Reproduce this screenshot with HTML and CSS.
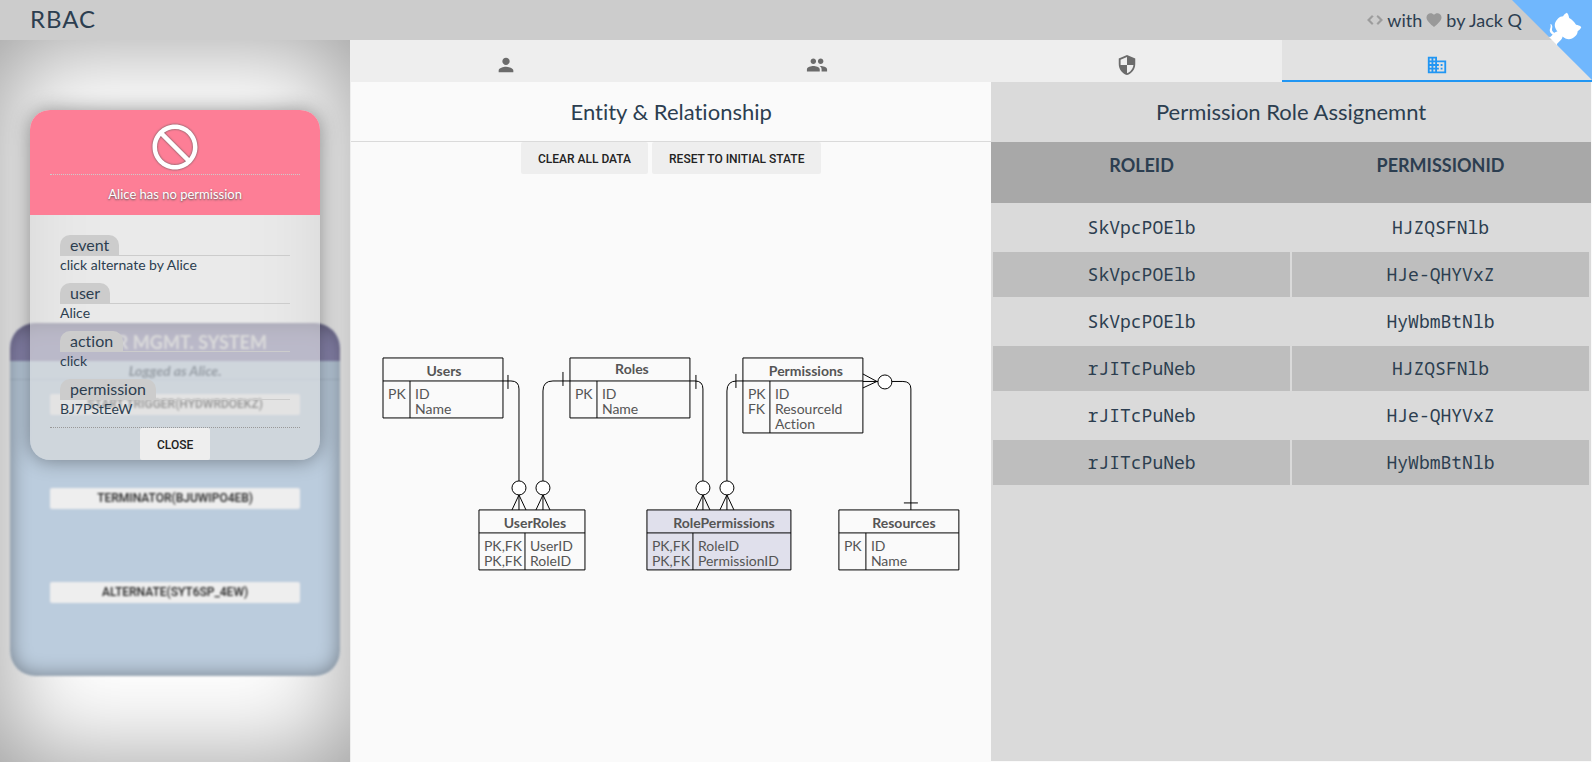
FILE: index.html
```html
<!DOCTYPE html>
<html lang="en">
<head>
<meta charset="utf-8">
<title>RBAC</title>
<link rel="stylesheet" href="styles.css">
</head>
<body>
<header class="topbar">
  <h1 class="brand">RBAC</h1>
  <p class="credit">
    <svg class="credit-icon credit-code" viewBox="0 0 24 24" aria-hidden="true"><path d="M9.4 16.6L4.8 12l4.6-4.6L8 6l-6 6 6 6 1.4-1.4zm5.2 0l4.6-4.6-4.6-4.6L16 6l6 6-6 6-1.4-1.4z"/></svg>
    <span>with</span>
    <svg class="credit-icon" viewBox="0 0 24 24" aria-hidden="true"><path d="M12 21.35l-1.45-1.32C5.4 15.36 2 12.28 2 8.5 2 5.42 4.42 3 7.5 3c1.74 0 3.41.81 4.5 2.09C13.09 3.81 14.76 3 16.5 3 19.58 3 22 5.42 22 8.5c0 3.78-3.4 6.86-8.55 11.54L12 21.35z"/></svg>
    <span>by Jack Q</span>
  </p>
</header>
<a class="corner" href="#" aria-label="View source on GitHub">
  <svg viewBox="0 0 250 250" aria-hidden="true">
    <path class="corner-bg" d="M0,0 L115,115 L130,115 L142,142 L250,250 L250,0 Z"/>
    <path class="corner-cat" d="M128.3,109.0 C113.8,99.7 119.0,89.6 119.0,89.6 C122.0,82.7 120.5,78.6 120.5,78.6 C119.2,72.0 123.4,76.3 123.4,76.3 C127.3,80.9 125.5,87.3 125.5,87.3 C122.9,97.6 130.6,101.9 134.4,103.2"/>
    <path class="corner-cat" d="M115.0,115.0 C114.9,115.1 118.7,116.5 119.8,115.4 L133.7,101.6 C136.9,99.2 139.9,98.4 142.2,98.6 C133.8,88.0 127.5,74.4 143.8,58.0 C148.5,53.4 154.0,51.2 159.7,51.0 C160.3,49.4 163.2,43.6 171.4,40.1 C171.4,40.1 176.1,42.5 178.8,56.2 C183.1,58.6 187.2,61.8 190.9,65.4 C194.5,69.0 197.7,73.2 200.1,77.6 C213.8,80.2 216.3,84.9 216.3,84.9 C212.7,93.1 206.9,96.0 205.4,96.6 C205.1,102.4 203.0,107.8 198.3,112.5 C181.9,128.9 168.3,122.5 157.7,114.1 C157.9,116.9 156.7,120.9 152.7,124.9 L141.0,136.5 C139.8,137.7 141.6,141.9 141.8,141.8 Z"/>
  </svg>
</a>
<div class="layout">
  <aside class="preview">
    <section class="system">
      <h2 class="system-title">USER MGMT. SYSTEM</h2>
      <p class="system-user">Logged as Alice.</p>
      <div class="system-actions">
        <button class="system-button" type="button">START TRIGGER(HYDWRDOEKZ)</button>
        <button class="system-button" type="button">TERMINATOR(BJUWIPO4EB)</button>
        <button class="system-button" type="button">ALTERNATE(SYT6SP_4EW)</button>
      </div>
    </section>
    <section class="dialog" role="dialog" aria-label="Alice has no permission">
      <div class="dialog-head">
        <div class="dialog-icon">
          <svg viewBox="0 0 24 24" aria-hidden="true"><path d="M12 2C6.480 2 2 6.480 2 12s4.480 10 10 10 10-4.480 10-10S17.520 2 12 2zM4 12c0-4.420 3.580-8 8-8 1.850 0 3.550.63 4.900 1.690L5.690 16.900C4.630 15.550 4 13.850 4 12zm8 8c-1.850 0-3.550-.63-4.900-1.690L18.310 7.100C19.370 8.450 20 10.150 20 12c0 4.420-3.580 8-8 8z" transform="matrix(-1 0 0 1 24 0)"/></svg>
        </div>
        <p class="dialog-message">Alice has no permission</p>
      </div>
      <dl class="facts">
        <div class="fact"><dt><span>event</span></dt><dd>click alternate by Alice</dd></div>
        <div class="fact"><dt><span>user</span></dt><dd>Alice</dd></div>
        <div class="fact"><dt><span>action</span></dt><dd>click</dd></div>
        <div class="fact"><dt><span>permission</span></dt><dd>BJ7PStEeW</dd></div>
      </dl>
      <div class="dialog-foot"><button class="button" type="button">CLOSE</button></div>
    </section>
  </aside>
  <main class="content">
    <nav class="tabs">
      <a class="tab" href="#users" aria-label="Users"><svg viewBox="0 0 24 24"><path d="M12 12c2.210 0 4-1.790 4-4s-1.790-4-4-4-4 1.790-4 4 1.790 4 4 4zm0 2c-2.670 0-8 1.340-8 4v2h16v-2c0-2.660-5.330-4-8-4z"/></svg></a>
      <a class="tab" href="#roles" aria-label="Roles"><svg viewBox="0 0 24 24"><path d="M16 11c1.660 0 2.990-1.340 2.990-3S17.660 5 16 5c-1.660 0-3 1.340-3 3s1.340 3 3 3zm-8 0c1.660 0 2.990-1.340 2.990-3S9.660 5 8 5C6.340 5 5 6.340 5 8s1.340 3 3 3zm0 2c-2.330 0-7 1.170-7 3.500V19h14v-2.500c0-2.330-4.670-3.500-7-3.500zm8 0c-.29 0-.62.020-.97.050 1.160.84 1.970 1.970 1.970 3.450V19h6v-2.500c0-2.330-4.670-3.500-7-3.500z"/></svg></a>
      <a class="tab" href="#permissions" aria-label="Permissions"><svg viewBox="0 0 24 24"><path d="M12 1L3 5v6c0 5.550 3.840 10.740 9 12 5.160-1.260 9-6.450 9-12V5l-9-4zm0 10.990h7c-.53 4.120-3.280 7.790-7 8.940V12H5V6.300l7-3.110v8.800z"/></svg></a>
      <a class="tab tab-active" href="#relations" aria-label="Relations"><svg viewBox="0 0 24 24"><path d="M12 7V3H2v18h20V7H12zM6 19H4v-2h2v2zm0-4H4v-2h2v2zm0-4H4V9h2v2zm0-4H4V5h2v2zm4 12H8v-2h2v2zm0-4H8v-2h2v2zm0-4H8V9h2v2zm0-4H8V5h2v2zm10 12h-8v-2h2v-2h-2v-2h2v-2h-2V9h8v10zm-2-8h-2v2h2v-2zm0 4h-2v2h2v-2z"/></svg></a>
    </nav>
    <div class="panes">
      <section class="pane">
        <h2 class="pane-title">Entity &amp; Relationship</h2>
        <div class="toolbar">
          <button class="button" type="button">CLEAR ALL DATA</button>
          <button class="button" type="button">RESET TO INITIAL STATE</button>
        </div>
        <svg class="diagram" viewBox="351 174 640 500" role="img" aria-label="Entity relationship diagram">
          <!-- relations -->
          <g class="wire">
            <path d="M503 381H511Q519 381 519 389V481M508 375V389"/>
            <path d="M570 381H553Q543 381 543 391V481M563 372V386"/>
            <path d="M690 381H695Q703 381 703 389V481M696 375V389"/>
            <path d="M743 381H737Q727 381 727 391V481M736 374V388"/>
            <path d="M863 381.500H903Q911 381.500 911 389V510M904 503H918M863 374L877 381.500L863 388"/>
            <path d="M512 510L519 495L526 510M519 495V510M536 510L543 495L550 510M543 495V510"/>
            <path d="M696 510L703 495L710 510M703 495V510M720 510L727 495L734 510M727 495V510"/>
          </g>
          <g class="knob">
            <circle cx="519" cy="488" r="7"/><circle cx="543" cy="488" r="7"/>
            <circle cx="703" cy="488" r="7"/><circle cx="727" cy="488" r="7"/>
            <circle cx="885" cy="382" r="7"/>
          </g>
          <!-- entities -->
          <g class="box">
            <path d="M383 358H503V418H383ZM383 381H503M410 381V418"/>
            <path d="M570 358H690V418H570ZM570 381H690M597 381V418"/>
            <path d="M743 358H863V433H743ZM743 381H863M770 381V433"/>
            <path d="M479 510H585V570H479ZM479 533H585M525 533V570"/>
            <path class="box-active" d="M647 510H791V570H647ZM647 533H791M693 533V570"/>
            <path d="M839 510H959V570H839ZM839 533H959M866 533V570"/>
          </g>
          <g class="entity-name">
            <text x="444" y="376">Users</text><text x="632" y="374">Roles</text><text x="806" y="376">Permissions</text>
            <text x="535" y="528">UserRoles</text><text x="724" y="528">RolePermissions</text><text x="904" y="528">Resources</text>
          </g>
          <g class="entity-field">
            <text x="388" y="399">PK</text><text x="415" y="399">ID</text><text x="415" y="414">Name</text>
            <text x="575" y="399">PK</text><text x="602" y="399">ID</text><text x="602" y="414">Name</text>
            <text x="748" y="399">PK</text><text x="748" y="414">FK</text><text x="775" y="399">ID</text><text x="775" y="414">ResourceId</text><text x="775" y="429">Action</text>
            <text x="484" y="551">PK,FK</text><text x="484" y="566">PK,FK</text><text x="530" y="551">UserID</text><text x="530" y="566">RoleID</text>
            <text x="652" y="551">PK,FK</text><text x="652" y="566">PK,FK</text><text x="698" y="551">RoleID</text><text x="698" y="566">PermissionID</text>
            <text x="844" y="551">PK</text><text x="871" y="551">ID</text><text x="871" y="566">Name</text>
          </g>
        </svg>
      </section>
      <section class="pane pane-data">
        <h2 class="pane-title">Permission Role Assignemnt</h2>
        <table class="grid">
          <thead><tr><th scope="col">ROLEID</th><th scope="col">PERMISSIONID</th></tr></thead>
          <tbody>
            <tr><td>SkVpcPOElb</td><td>HJZQSFNlb</td></tr>
            <tr><td>SkVpcPOElb</td><td>HJe-QHYVxZ</td></tr>
            <tr><td>SkVpcPOElb</td><td>HyWbmBtNlb</td></tr>
            <tr><td>rJITcPuNeb</td><td>HJZQSFNlb</td></tr>
            <tr><td>rJITcPuNeb</td><td>HJe-QHYVxZ</td></tr>
            <tr><td>rJITcPuNeb</td><td>HyWbmBtNlb</td></tr>
          </tbody>
        </table>
      </section>
    </div>
  </main>
</div>
</body>
</html>
```
FILE: styles.css
```css
* { box-sizing: border-box; }

body {
  margin: 0;
  min-height: 100vh;
  display: flex;
  flex-direction: column;
  font-family: Lato, "Liberation Sans", sans-serif;
  font-variant-ligatures: none;
  color: #2c3e50;
  background: #fafafa;
}

h1, h2, p, dl, dd { margin: 0; font-weight: 400; }

/* top bar */
.topbar {
  display: flex;
  align-items: center;
  justify-content: space-between;
  height: 40px;
  padding: 0 70px 0 30px;
  background: #ccc;
}
.brand { font-size: 24px; line-height: 38px; padding-bottom: 2px; letter-spacing: 1px; }
.credit { display: flex; align-items: center; gap: 3px; font-size: 18px; }
.credit-icon { width: 18px; height: 18px; fill: #999; }
.credit-code { stroke: #999; }

.corner { position: absolute; top: 0; right: 0; z-index: 2; }
.corner svg { display: block; width: 80px; height: 80px; }
.corner-bg { fill: #70b7fd; }
.corner-cat { fill: #fff; }

.layout { flex: 1; display: flex; }

/* left preview */
.preview {
  position: relative;
  width: 22%;
  padding: 283px 10px 85px;
  background: #fff;
  box-shadow: inset 0 0 100px #999;
}
.system {
  height: 353px;
  border-radius: 25px;
  overflow: hidden;
  background: #bbccdd;
  filter: blur(1px);
  position: relative;
}
.system::after {
  content: "";
  position: absolute;
  inset: 0;
  border-radius: 25px;
  box-shadow: inset 0 0 20px rgba(0, 0, 0, .4);
}
.system-title {
  height: 38px;
  line-height: 38px;
  text-align: center;
  font-size: 18px;
  font-weight: 700;
  color: #ddd;
  background: #8884ac;
}
.system-user {
  height: 19px;
  line-height: 19px;
  text-align: center;
  font-size: 14px;
  font-style: italic;
  font-weight: 700;
  border-bottom: 1px solid #abc;
}
.system-actions {
  display: flex;
  flex-direction: column;
  gap: 73px;
  padding: 14px 40px;
}
.system-button {
  height: 21px;
  border: 0;
  padding: 0;
  border-radius: 2px;
  background: #eee;
  font: 500 12px/21px Roboto, sans-serif;
  color: #222;
}

/* dialog */
.dialog {
  position: absolute;
  top: 70px;
  left: 30px;
  right: 30px;
  border-radius: 20px;
  overflow: hidden;
  background: rgba(220, 220, 220, .6);
  box-shadow: 0 0 20px rgba(0, 0, 0, .4);
}
.dialog-head { padding: 10px 20px 2px; background: #fd7e96; color: #fff; }
.dialog-icon {
  display: flex;
  justify-content: center;
  border-bottom: 1px dotted #ccc;
}
.dialog-icon svg {
  width: 54px;
  height: 54px;
  fill: currentColor;
  filter: drop-shadow(0 0 1px #555);
}
.dialog-message {
  line-height: 38px;
  text-align: center;
  font-size: 13px;
  text-shadow: 0 1px 2px #555;
}
.facts { padding: 20px 30px 0; }
.fact { padding-bottom: 9px; }
.fact dt { display: flex; border-bottom: 1px solid #ccc; font-size: 16px; line-height: 20px; }
.fact dt span { padding: 0 10px; border-radius: 10px 10px 0 0; background: #ccc; }
.fact dd { font-size: 14px; line-height: 18px; }
.dialog-foot {
  display: flex;
  justify-content: center;
  margin: 0 20px;
  border-top: 1px dotted #999;
}

.button {
  height: 32px;
  padding: 2px 17px 0;
  border: 0;
  border-radius: 2px;
  background: #eee;
  font: 500 12px/30px Roboto, sans-serif;
  color: #222;
}

/* tabs */
.content { flex: 1; display: flex; flex-direction: column; border-left: 1px solid #eee; }
.tabs { display: flex; height: 42px; background: #eee; }
.tab {
  flex: 1;
  display: flex;
  justify-content: center;
  padding-top: 14px;
  border-bottom: 2px solid transparent;
  color: #6b6b6b;
}
.tab svg { width: 22px; height: 22px; fill: currentColor; }
.tab-active { color: #2196f3; background: #e2e2e2; border-color: #2196f3; }

/* panes */
.panes { flex: 1; display: grid; grid-template-columns: 16fr 15fr; padding: 0 1px 1px 0; }
.pane { background: #fafafa; }
.pane-data { background: #dadada; }
.pane-title {
  line-height: 59px;
  text-align: center;
  font-size: 22px;
  border-bottom: 1px solid #dadada;
}
.toolbar { display: flex; justify-content: center; gap: 4px; }
.diagram { display: block; width: 100%; }
.wire, .box { fill: none; stroke: #000; }
.knob { fill: #fff; stroke: #000; }
.box-active { fill: #e0e0ec; }
.entity-name { font-size: 14px; font-weight: 700; fill: #555; text-anchor: middle; }
.entity-field { font-size: 14px; fill: #555; }

/* data table */
.grid { display: block; text-align: center; font-size: 18px; }
.grid thead { display: block; background: #a8a8a8; padding: 1px 0 15px; }
.grid tbody { display: grid; gap: 2px; padding: 2px 0; }
.grid tr { display: grid; grid-template-columns: 1fr 1fr; gap: 2px; padding: 0 2px; }
.grid th, .grid td { padding: 0; line-height: 45px; }
.grid td { font-family: "Noto Sans Mono", "DejaVu Sans Mono", monospace; }
.grid tbody tr:nth-child(even) td { background: #bebebe; }
```
